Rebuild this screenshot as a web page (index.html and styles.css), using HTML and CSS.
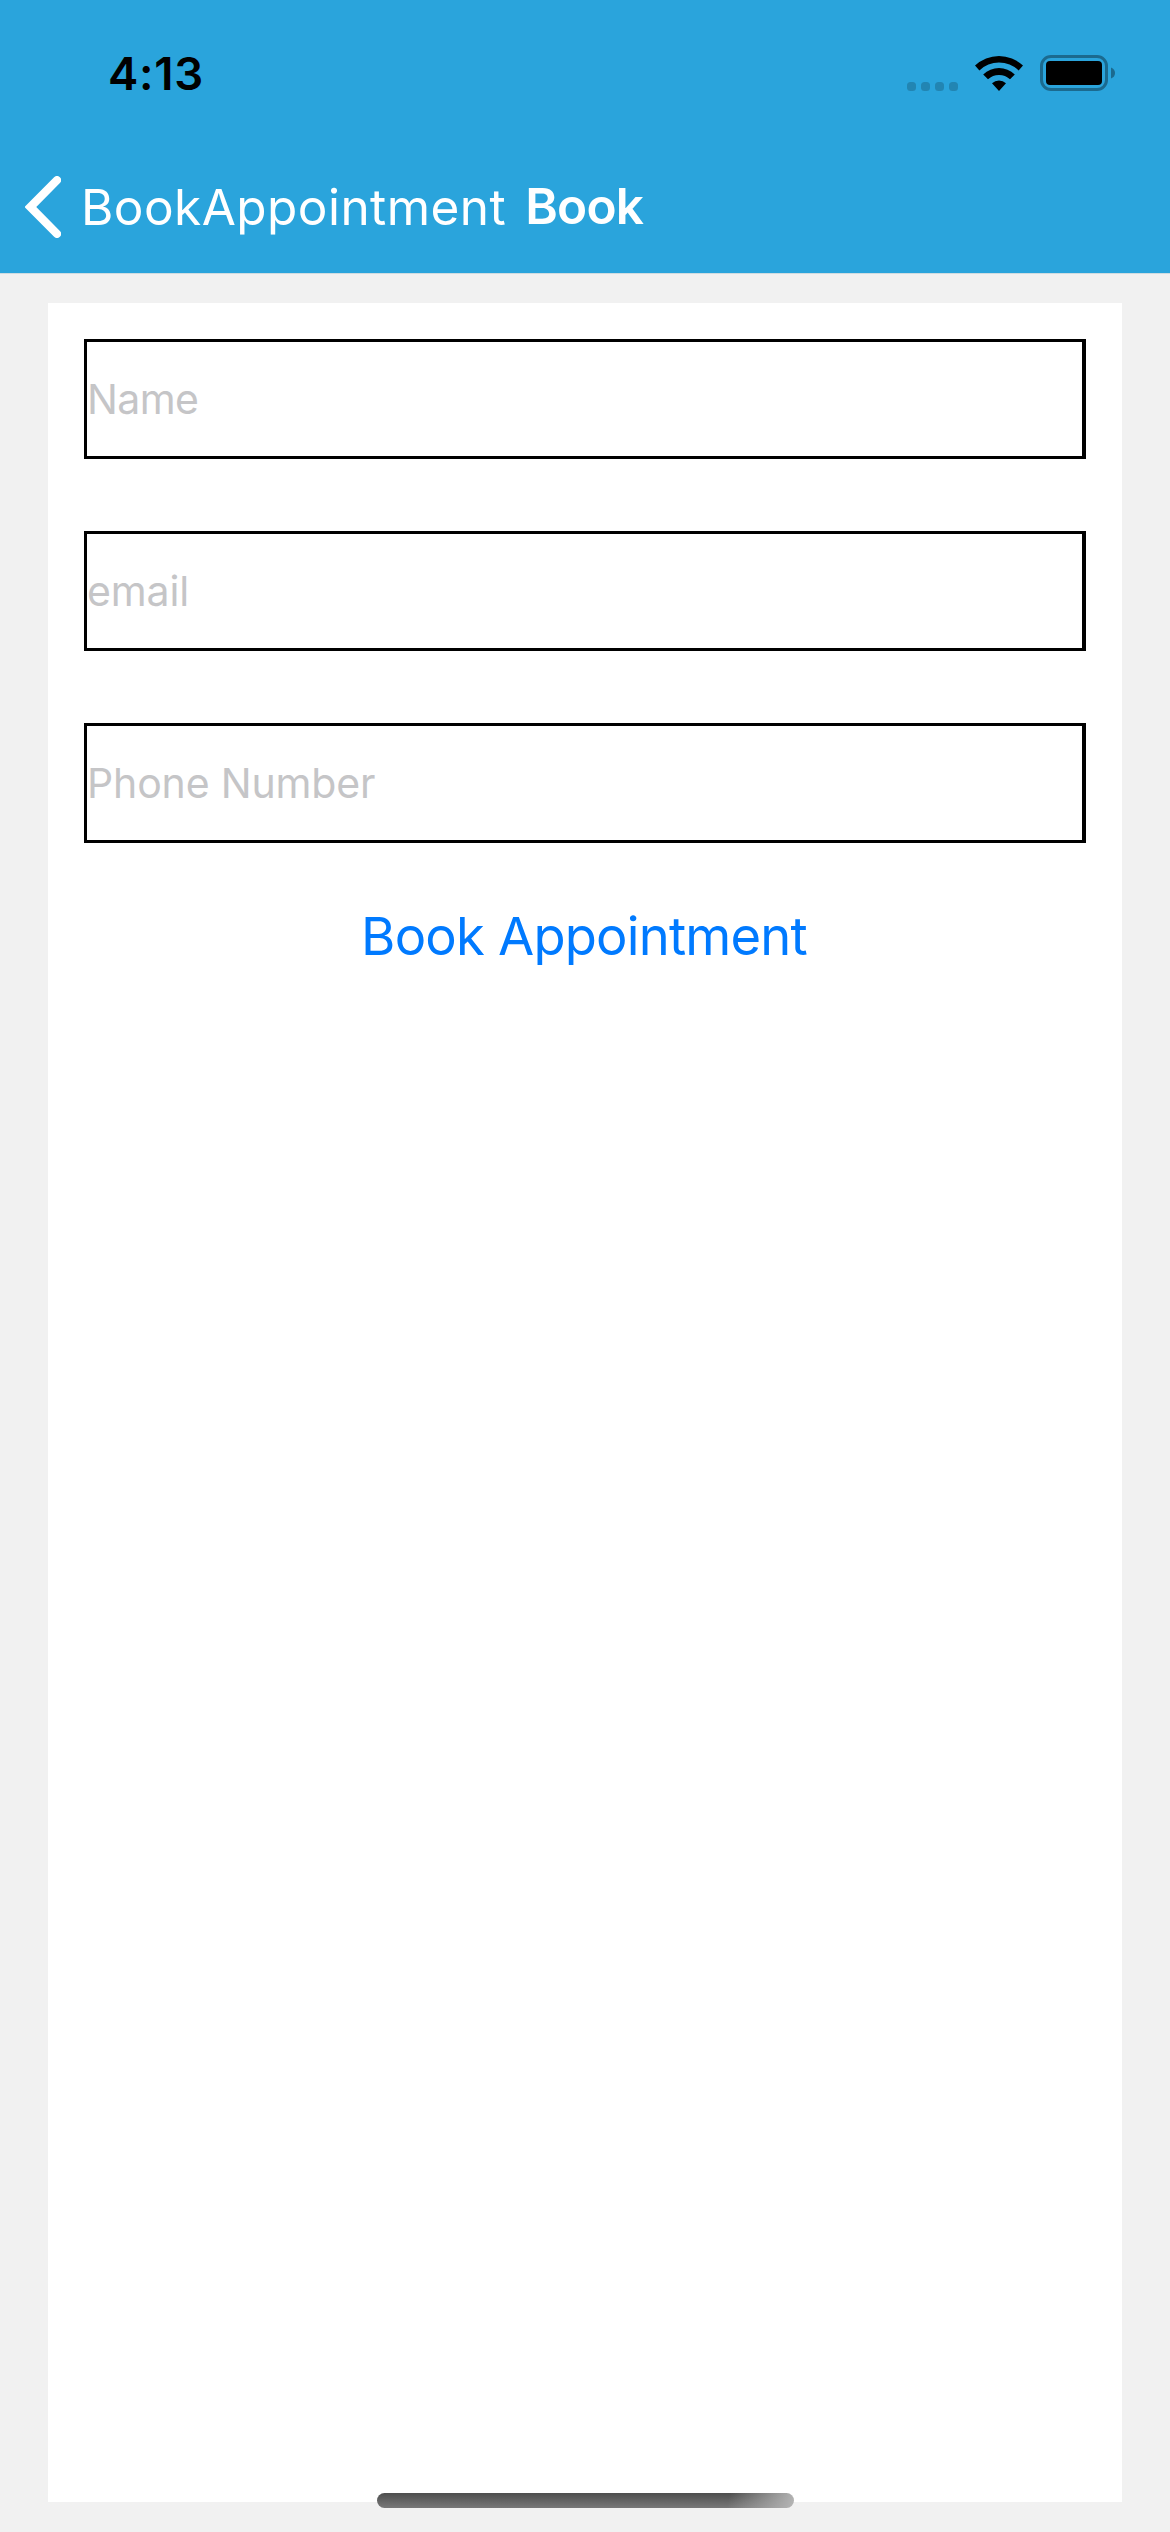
FILE: index.html
```html
<!DOCTYPE html>
<html lang="en">
<head>
<meta charset="utf-8">
<title>Book</title>
<link rel="stylesheet" href="styles.css">
</head>
<body>
<div class="screen">
  <header class="header">
    <div class="status">
      <span class="time">4:13</span>
      <div class="indicators">
        <svg class="signal" width="51" height="9" viewBox="0 0 51 9"><rect width="9" height="9" rx="3.5"/><rect x="14" width="9" height="9" rx="3.5"/><rect x="28" width="9" height="9" rx="3.5"/><rect x="42" width="9" height="9" rx="3.5"/></svg>
        <svg class="wifi" width="48" height="36" viewBox="0 0 48 36"><path d="M0 10.6A34.6 34.6 0 0 1 48 10.6L43.6 15.4A28.1 28.1 0 0 0 4.4 15.4ZM8.2 19.4A23 23 0 0 1 39.8 19.4L35 24.2A16.2 16.2 0 0 0 13 24.2ZM17 28.2A10.6 10.6 0 0 1 31 28.2L24 36Z"/></svg>
        <svg class="battery" width="75" height="36" viewBox="0 0 75 36"><rect class="shell" x="1.5" y="1.5" width="65" height="33" rx="9.5"/><rect x="6" y="6" width="56" height="24" rx="4"/><path class="cap" d="M71 12.5Q75 14 75 18T71 23.5Z"/></svg>
      </div>
    </div>
    <nav class="nav">
      <svg class="back" width="36" height="62" viewBox="0 0 36 62"><path d="M32 4.2 5.4 31 32 57.8"/></svg>
      <span class="back-title">BookAppointment</span>
      <h1 class="title">Book</h1>
    </nav>
  </header>
  <main class="content">
    <form class="card">
      <input class="field name" type="text" placeholder="Name">
      <input class="field email" type="email" placeholder="email">
      <input class="field phone" type="tel" placeholder="Phone Number">
      <button class="submit" type="button">Book Appointment</button>
    </form>
  </main>
  <div class="home-indicator"></div>
</div>
</body>
</html>
```
FILE: styles.css
```css
* { box-sizing: border-box; }
body { margin: 0; font-family: Inter, "Liberation Sans", sans-serif; }
.screen { position: relative; display: flex; flex-direction: column; width: 1170px; height: 2532px; background: #f1f1f1; }
.header { height: 274px; background: #2aa4dc; border-bottom: 1px solid #cfdce1; }
.status { display: flex; justify-content: space-between; height: 141px; padding: 49px 55px 0 108px; }
.time { font-size: 45.5px; font-weight: 600; line-height: 50px; height: 50px; letter-spacing: 0.7px; }
.indicators { display: flex; align-items: flex-start; padding-top: 6px; }
.signal { margin: 27px 17px 0 0; fill: #2285b2; }
.wifi { margin-right: 17px; }
.shell { fill: none; stroke: #1b6a8f; stroke-width: 3; }
.cap { fill: #1b6a8f; }
.nav { display: flex; align-items: center; height: 132px; padding-left: 25px; color: #fff; }
.back { fill: none; stroke: #fff; stroke-width: 8.2; stroke-linecap: round; }
.back-title { margin-left: 20px; font-size: 49.5px; line-height: 60px; letter-spacing: 0.45px; }
.title { margin: 0 0 2px 19px; font-size: 49.5px; font-weight: 600; line-height: 60px; letter-spacing: -0.8px; }
.content { flex: 1; padding: 29px 48px 30px; }
.card { display: flex; flex-direction: column; height: 100%; padding: 36px; background: #fff; }
.field { display: block; width: 100%; height: 120px; margin: 0 0 72px; padding: 0; border: 3px solid #000; border-right-width: 4px; border-radius: 0; background: #fff; font: 41px Inter, "Liberation Sans", sans-serif; letter-spacing: -0.15px; }
.field::placeholder { color: #c5c5c7; opacity: 1; }
.name { letter-spacing: -0.6px; }
.submit { align-self: center; margin: -12px 2px 0 0; padding: 0; border: 0; background: none; color: #007aff; font: 52.5px/66px Inter, "Liberation Sans", sans-serif; letter-spacing: -0.8px; white-space: nowrap; }
.home-indicator { position: absolute; left: 377px; top: 2493px; width: 417px; height: 15px; border-radius: 8px; background: linear-gradient(100deg, transparent 84%, #b5b5b5 100%), linear-gradient(#4e4e4e, #787878); }
```
